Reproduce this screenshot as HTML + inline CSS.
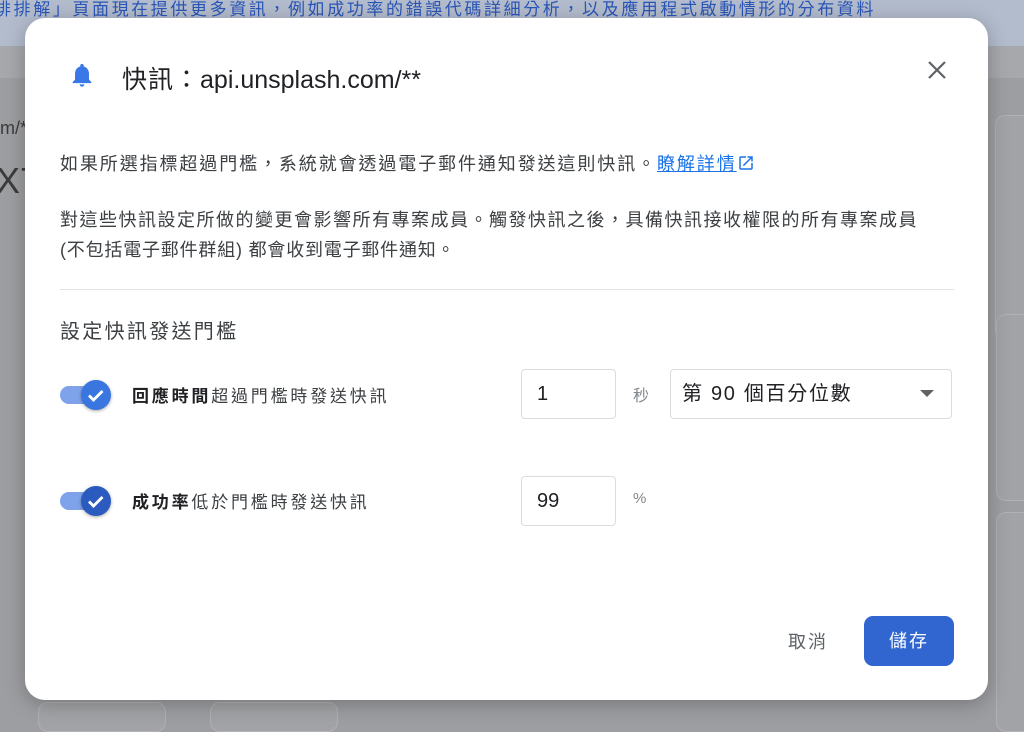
<!DOCTYPE html>
<html><head><meta charset="utf-8"><style>
*{box-sizing:border-box;margin:0;padding:0}
body{width:1024px;height:718px;overflow:hidden;background:#9d9ea1;font-family:"Liberation Sans","Noto Sans CJK TC",sans-serif;position:relative;color:#202124}
.banner{position:absolute;left:0;top:0;width:1024px;height:46px;background:#b3bccd;color:#2a56b8;font-size:17px;line-height:20px;white-space:nowrap}
.band2{position:absolute;left:0;top:46px;width:1024px;height:32px;background:#a6a8ac}
.bgcard{position:absolute;background:#a2a3a6;border:1px solid #b0b1b4;border-radius:10px}
.dlg{position:absolute;left:25px;top:18px;width:963px;height:682px;background:#fff;border-radius:20px;box-shadow:0 4px 20px rgba(0,0,0,.25)}
.t{position:absolute;white-space:nowrap}
.inp{position:absolute;border:1px solid #dadce0;border-radius:4px;background:#fff;font-size:20px;color:#202124;padding-left:15px}
.tog{position:absolute;width:50px;height:18px;border-radius:9px;background:#7fa3ea}
.knob{position:absolute;width:30px;height:30px;border-radius:50%;top:-6px;left:21px;box-shadow:0 1px 3px rgba(0,0,0,.35)}
</style></head><body>
<div class="banner"><span style="position:absolute;left:-6px;top:0;letter-spacing:2.6px">排排解」頁面現在提供更多資訊，例如成功率的錯誤代碼詳細分析，以及應用程式啟動情形的分布資料</span></div>
<div class="band2"></div>
<div class="t" style="left:0;top:118px;font-size:18px;color:#3c3c3c">m/*</div>
<div class="t" style="left:-4px;top:160px;font-size:36px;color:#3c3c3c">X7</div>
<div class="bgcard" style="left:995px;top:115px;width:40px;height:225px"></div>
<div class="bgcard" style="left:996px;top:314px;width:40px;height:187px"></div>
<div class="bgcard" style="left:996px;top:512px;width:40px;height:220px"></div>
<div class="bgcard" style="left:38px;top:702px;width:128px;height:30px"></div>
<div class="bgcard" style="left:210px;top:702px;width:128px;height:30px"></div>
<div class="dlg">
 <svg class="t" style="left:43px;top:42px" width="28" height="30" viewBox="0 0 24 24"><path fill="#3b78e7" d="M12 22c1.1 0 2-.9 2-2h-4c0 1.1.9 2 2 2zm6-6v-5c0-3.07-1.64-5.64-4.5-6.32V4c0-.83-.67-1.5-1.5-1.5s-1.5.67-1.5 1.5v.68C7.63 5.36 6 7.92 6 11v5l-2 2v1h16v-1l-2-2z"/></svg>
 <div class="t" style="left:97px;top:42px;font-size:25px;color:#202124"><span style="letter-spacing:1px">快訊：</span>api.unsplash.com/**</div>
 <svg class="t" style="left:900px;top:40px" width="24" height="24" viewBox="0 0 24 24"><path d="M4 4L20 20M20 4L4 20" stroke="#5f6368" stroke-width="2.2"/></svg>
 <div class="t" style="left:35px;top:132px;font-size:18px;color:#3c4043;letter-spacing:1.9px">如果所選指標超過門檻，系統就會透過電子郵件通知發送這則快訊。<span style="color:#1a73e8;text-decoration:underline">瞭解詳情</span><svg style="vertical-align:-2px;margin-left:0" width="18" height="18" viewBox="0 0 24 24"><path d="M19 19H5V5h7V3H5a2 2 0 00-2 2v14a2 2 0 002 2h14c1.1 0 2-.9 2-2v-7h-2v7zM14 3v2h3.59l-9.83 9.83 1.41 1.41L19 6.41V10h2V3h-7z" fill="#1a73e8"/></svg></div>
 <div class="t" style="left:35px;top:187px;font-size:18px;color:#3c4043;line-height:30px;letter-spacing:1.5px">對這些快訊設定所做的變更會影響所有專案成員。觸發快訊之後，具備快訊接收權限的所有專案成員<br><span style="letter-spacing:0.8px">(不包括電子郵件群組) 都會收到電子郵件通知。</span></div>
 <div class="t" style="left:35px;top:297px;font-size:20px;color:#3c4043;letter-spacing:2.3px">設定快訊發送門檻</div>
 <div class="t" style="left:35px;top:271px;width:894px;height:1px;background:#e3e3e3"></div>
 <div class="tog" style="left:35px;top:368px"><div class="knob" style="background:#3a76e0"><svg width="30" height="30" viewBox="0 0 30 30"><path d="M8 15.5l4.5 4.5 9-9" stroke="#fff" stroke-width="2.8" fill="none"/></svg></div></div>
 <div class="t" style="left:107px;top:364px;font-size:17px;color:#3c4043;letter-spacing:2.8px"><b style="color:#202124">回應時間</b>超過門檻時發送快訊</div>
 <div class="inp" style="left:496px;top:351px;width:95px;height:50px;line-height:48px">1</div>
 <div class="t" style="left:608px;top:364px;font-size:16px;color:#80868b">秒</div>
 <div class="inp" style="left:645px;top:351px;width:282px;height:50px;line-height:48px;padding-left:11px;letter-spacing:1.7px">第 90 個百分位數<svg style="position:absolute;right:17px;top:20px" width="14" height="8"><path d="M0 0h14L7 7z" fill="#5f6368"/></svg></div>
 <div class="tog" style="left:35px;top:474px"><div class="knob" style="background:#2c5bc0"><svg width="30" height="30" viewBox="0 0 30 30"><path d="M8 15.5l4.5 4.5 9-9" stroke="#fff" stroke-width="2.8" fill="none"/></svg></div></div>
 <div class="t" style="left:107px;top:470px;font-size:17px;color:#3c4043;letter-spacing:2.8px"><b style="color:#202124">成功率</b>低於門檻時發送快訊</div>
 <div class="inp" style="left:496px;top:458px;width:95px;height:50px;line-height:48px">99</div>
 <div class="t" style="left:608px;top:472px;font-size:15px;color:#80868b">%</div>
 <div class="t" style="left:763px;top:610px;font-size:18px;color:#5f6368;letter-spacing:2px">取消</div>
 <div class="t" style="left:839px;top:598px;width:90px;height:50px;border-radius:9px;background:#3166d0;color:#fff;font-size:18px;text-align:center;line-height:50px;letter-spacing:2px">儲存</div>
</div>
</body></html>
